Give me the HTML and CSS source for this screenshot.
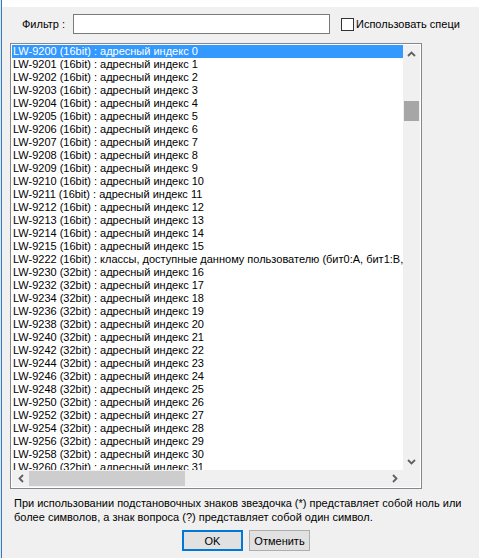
FILE: index.html
```html
<!DOCTYPE html>
<html lang="ru">
<head>
<meta charset="utf-8">
<title>Фильтр</title>
<link rel="stylesheet" href="styles.css">
</head>
<body>
<div class="page">
  <div class="edge"></div>
  <div class="window">
    <div class="titlebar"></div>
    <div class="content">
      <div class="filter-row">
        <label class="filter-label">Фильтр :</label>
        <div class="filter-input"></div>
        <div class="checkbox"></div>
        <div class="check-label">Использовать специальные символы</div>
      </div>
      <div class="listbox">
        <div class="items">
          <div class="item selected">LW-9200 (16bit) : адресный индекс 0</div>
          <div class="item">LW-9201 (16bit) : адресный индекс 1</div>
          <div class="item">LW-9202 (16bit) : адресный индекс 2</div>
          <div class="item">LW-9203 (16bit) : адресный индекс 3</div>
          <div class="item">LW-9204 (16bit) : адресный индекс 4</div>
          <div class="item">LW-9205 (16bit) : адресный индекс 5</div>
          <div class="item">LW-9206 (16bit) : адресный индекс 6</div>
          <div class="item">LW-9207 (16bit) : адресный индекс 7</div>
          <div class="item">LW-9208 (16bit) : адресный индекс 8</div>
          <div class="item">LW-9209 (16bit) : адресный индекс 9</div>
          <div class="item">LW-9210 (16bit) : адресный индекс 10</div>
          <div class="item">LW-9211 (16bit) : адресный индекс 11</div>
          <div class="item">LW-9212 (16bit) : адресный индекс 12</div>
          <div class="item">LW-9213 (16bit) : адресный индекс 13</div>
          <div class="item">LW-9214 (16bit) : адресный индекс 14</div>
          <div class="item">LW-9215 (16bit) : адресный индекс 15</div>
          <div class="item">LW-9222 (16bit) : классы, доступные данному пользователю (бит0:A, бит1:B, бит2:C, бит3:D)</div>
          <div class="item">LW-9230 (32bit) : адресный индекс 16</div>
          <div class="item">LW-9232 (32bit) : адресный индекс 17</div>
          <div class="item">LW-9234 (32bit) : адресный индекс 18</div>
          <div class="item">LW-9236 (32bit) : адресный индекс 19</div>
          <div class="item">LW-9238 (32bit) : адресный индекс 20</div>
          <div class="item">LW-9240 (32bit) : адресный индекс 21</div>
          <div class="item">LW-9242 (32bit) : адресный индекс 22</div>
          <div class="item">LW-9244 (32bit) : адресный индекс 23</div>
          <div class="item">LW-9246 (32bit) : адресный индекс 24</div>
          <div class="item">LW-9248 (32bit) : адресный индекс 25</div>
          <div class="item">LW-9250 (32bit) : адресный индекс 26</div>
          <div class="item">LW-9252 (32bit) : адресный индекс 27</div>
          <div class="item">LW-9254 (32bit) : адресный индекс 28</div>
          <div class="item">LW-9256 (32bit) : адресный индекс 29</div>
          <div class="item">LW-9258 (32bit) : адресный индекс 30</div>
          <div class="item">LW-9260 (32bit) : адресный индекс 31</div>
          <div class="item">LW-9262 (32bit) : адресный индекс 32</div>
        </div>
        <div class="vscroll">
          <div class="sbtn">
            <svg width="9" height="6" viewBox="0 0 9 6"><path d="M1 5 L4.5 1.5 L8 5" fill="none" stroke="#606060" stroke-width="1.8"/></svg>
          </div>
          <div class="vtrack"><div class="vthumb"></div></div>
          <div class="sbtn">
            <svg width="9" height="6" viewBox="0 0 9 6"><path d="M1 1 L4.5 4.5 L8 1" fill="none" stroke="#606060" stroke-width="1.8"/></svg>
          </div>
        </div>
        <div class="hscroll">
          <div class="sbtn">
            <svg width="6" height="9" viewBox="0 0 6 9"><path d="M5 1 L1.5 4.5 L5 8" fill="none" stroke="#606060" stroke-width="1.8"/></svg>
          </div>
          <div class="htrack"><div class="hthumb"></div></div>
          <div class="sbtn">
            <svg width="6" height="9" viewBox="0 0 6 9"><path d="M1 1 L4.5 4.5 L1 8" fill="none" stroke="#606060" stroke-width="1.8"/></svg>
          </div>
        </div>
        <div class="corner"></div>
      </div>
      <p class="hint">При использовании подстановочных знаков звездочка (*) представляет собой ноль или более символов, а знак вопроса (?) представляет собой один символ.</p>
      <div class="buttons">
        <button class="btn btn-default">OK</button>
        <button class="btn">Отменить</button>
      </div>
    </div>
  </div>
</div>
</body>
</html>
```
FILE: styles.css
```css
html, body {
  margin: 0;
  padding: 0;
  background: #f0f0f0;
  height: 100%;
  overflow: hidden;
}
body {
  font-family: "Liberation Sans", Arial, sans-serif;
  font-size: 11px;
  color: #000;
}
.page {
  display: flex;
  height: 558px;
}
.edge {
  width: 1px;
  background: #e4e4e4;
}
.window {
  flex: 1;
  border-left: 1px solid #2b7bd3;
  display: flex;
  flex-direction: column;
}
.titlebar {
  height: 7px;
  background: #ffffff;
}
.content {
  display: flex;
  flex-direction: column;
}
.filter-row {
  display: flex;
  align-items: center;
  height: 20px;
  margin-top: 7px;
  padding-left: 20px;
}
.filter-label {
  width: 51px;
}
.filter-input {
  width: 257px;
  height: 20px;
  box-sizing: border-box;
  border: 1px solid #7a7a7a;
  background: #fff;
}
.checkbox {
  width: 13px;
  height: 13px;
  box-sizing: border-box;
  border: 1px solid #333;
  background: #fff;
  margin-left: 11px;
}
.check-label {
  margin-left: 2px;
  width: 104px;
  overflow: hidden;
  white-space: nowrap;
}
.listbox {
  margin-top: 9px;
  margin-left: 8px;
  width: 412px;
  height: 446px;
  box-sizing: border-box;
  border: 1px solid #828790;
  padding: 1px;
  background: #fff;
  display: grid;
  grid-template-columns: 1fr 17px;
  grid-template-rows: 1fr 17px;
}
.items {
  overflow: hidden;
  background: #fff;
}
.item {
  height: 13px;
  line-height: 13px;
  padding-left: 1px;
  white-space: nowrap;
}
.item.selected {
  background: #3399ff;
  color: #fff;
}
.vscroll {
  background: #f0f0f0;
  display: flex;
  flex-direction: column;
}
.hscroll {
  background: #f0f0f0;
  display: flex;
}
.sbtn {
  width: 17px;
  height: 17px;
  display: flex;
  align-items: center;
  justify-content: center;
  flex: none;
}
.vtrack {
  flex: 1;
  padding-top: 39px;
}
.vthumb {
  margin: 0 1px;
  height: 20px;
  background: #a6a6a6;
}
.htrack {
  flex: 1;
  display: flex;
  align-items: center;
}
.hthumb {
  width: 156px;
  height: 15px;
  background: #cdcdcd;
}
.corner {
  background: #f0f0f0;
}
.hint {
  margin: 7px 0 0 12px;
  width: 460px;
  line-height: 14px;
}
.buttons {
  display: flex;
  gap: 6px;
  margin-top: 6px;
  margin-left: 180px;
}
.btn {
  width: 61px;
  height: 21px;
  box-sizing: border-box;
  border: 1px solid #adadad;
  background: #e1e1e1;
  font-family: "Liberation Sans", Arial, sans-serif;
  font-size: 11px;
  color: #000;
  padding: 0;
}
.btn-default {
  border: 2px solid #0078d7;
}
```
